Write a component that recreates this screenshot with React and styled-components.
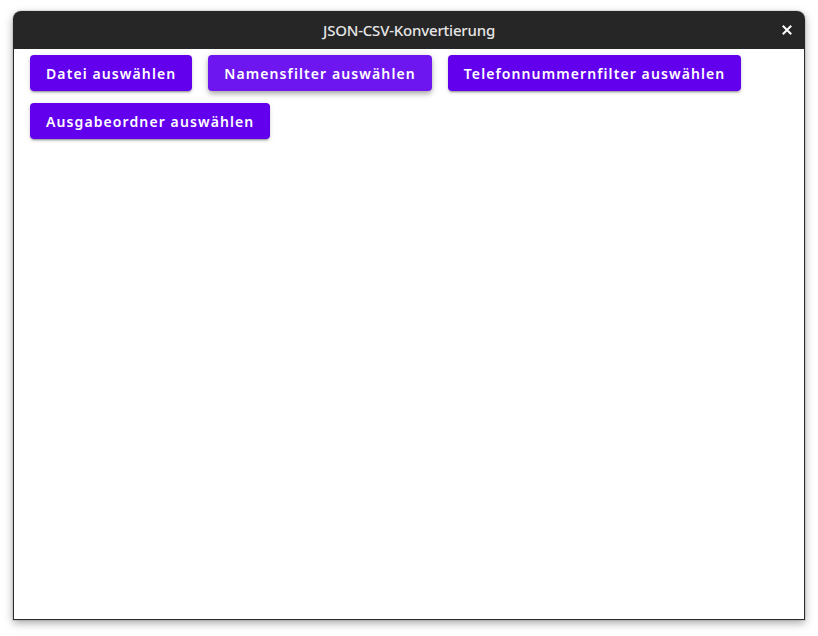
import React from "react"
import styled, { createGlobalStyle } from "styled-components"

const GlobalStyle = createGlobalStyle`
  html, body {
    margin: 0;
    padding: 0;
    background: #ffffff;
  }
  body {
    font-family: "Noto Sans", "Open Sans", sans-serif;
  }
`

const Page = styled.div`
  width: 818px;
  height: 636px;
  padding: 11px 13px 0 13px;
  box-sizing: border-box;
`

const Window = styled.div`
  width: 792px;
  height: 609px;
  display: flex;
  flex-direction: column;
  border-radius: 8px 8px 0 0;
  box-shadow: 0 3px 9px rgba(0, 0, 0, 0.35), 0 0 0 1px rgba(0, 0, 0, 0.08);
  overflow: hidden;
`

const TitleBar = styled.div`
  height: 38px;
  flex: none;
  background: #262626;
  display: flex;
  align-items: center;
  justify-content: center;
  position: relative;
  color: #e6e6e6;
  font-family: "Noto Sans", sans-serif;
  font-size: 15px;
  font-weight: 500;
  letter-spacing: -0.2px;
`

const CloseButton = styled.button`
  position: absolute;
  right: 10px;
  top: 11px;
  width: 16px;
  height: 16px;
  padding: 0;
  border: none;
  background: none;
  display: flex;
  align-items: center;
  justify-content: center;
  cursor: pointer;
`

const Content = styled.div`
  flex: 1;
  background: #ffffff;
  border: 1px solid #2b2b2b;
  border-top: none;
  padding: 6px 16px;
  display: flex;
  flex-wrap: wrap;
  align-content: flex-start;
  gap: 12px 16px;
`

const Button = styled.button`
  height: 36px;
  padding: 0 16px;
  border: none;
  border-radius: 4px;
  background: ${({ $hover }) => ($hover ? "#6d16ef" : "#6200ee")};
  color: #ffffff;
  font-family: "Noto Sans", sans-serif;
  font-size: 14px;
  font-weight: 600;
  letter-spacing: 1.1px;
  box-shadow: ${({ $hover }) =>
    $hover
      ? "0 2px 4px -1px rgba(0,0,0,0.2), 0 4px 5px 0 rgba(0,0,0,0.14), 0 1px 10px 0 rgba(0,0,0,0.12)"
      : "0 3px 1px -2px rgba(0,0,0,0.2), 0 2px 2px 0 rgba(0,0,0,0.14), 0 1px 5px 0 rgba(0,0,0,0.12)"};
  cursor: pointer;
`

const labels = [
  "Datei auswählen",
  "Namensfilter auswählen",
  "Telefonnummernfilter auswählen",
  "Ausgabeordner auswählen",
]

const App = () => {
  return (
    <Page>
      <GlobalStyle />
      <Window>
        <TitleBar>
          JSON-CSV-Konvertierung
          <CloseButton aria-label="Schließen">
            <svg width="10" height="10" viewBox="0 0 10 10">
              <path
                d="M1.5 1.5 L8.5 8.5 M8.5 1.5 L1.5 8.5"
                stroke="#ffffff"
                strokeWidth="2"
                strokeLinecap="square"
              />
            </svg>
          </CloseButton>
        </TitleBar>
        <Content>
          {labels.map((label, i) => (
            <Button key={label} $hover={i === 1}>
              {label}
            </Button>
          ))}
        </Content>
      </Window>
    </Page>
  )
}

export default App
